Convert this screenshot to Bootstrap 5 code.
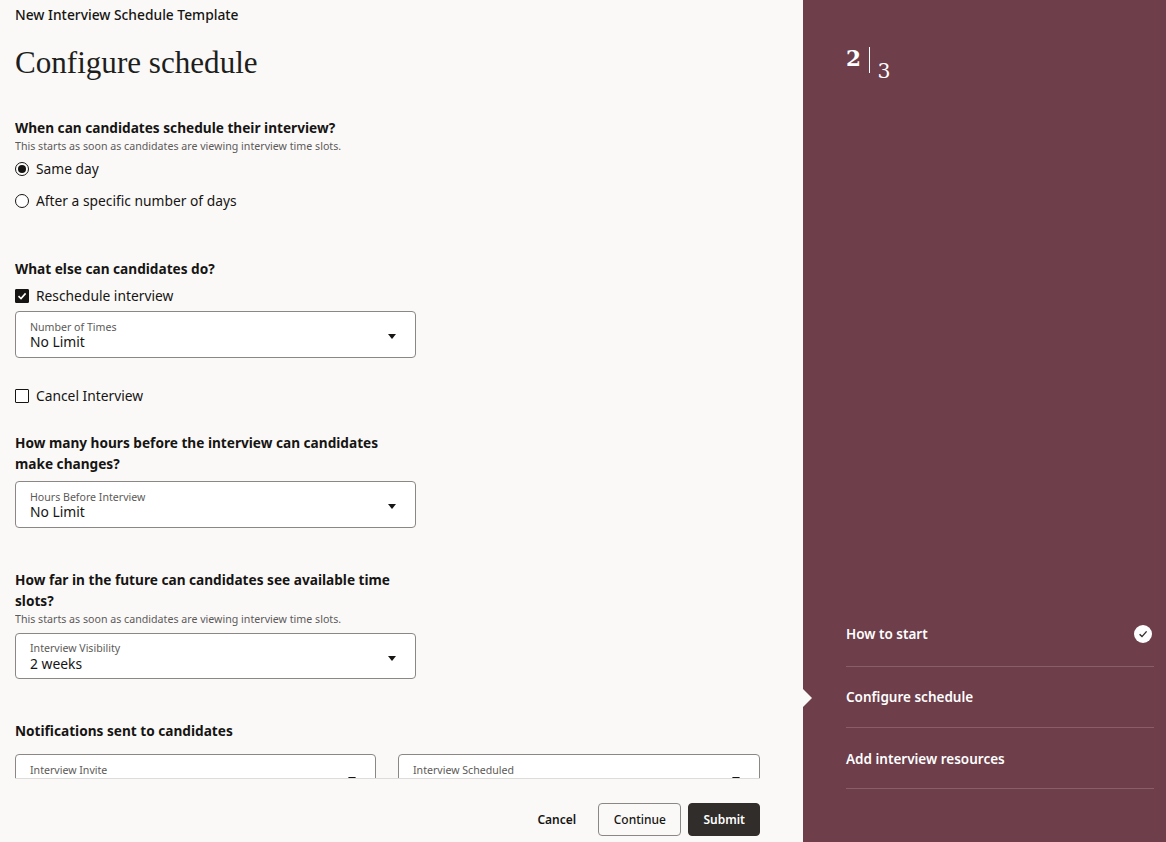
<!DOCTYPE html>
<html lang="en">
<head>
<meta charset="utf-8">
<title>Configure schedule</title>
<link href="https://cdn.jsdelivr.net/npm/bootstrap@5.3.0/dist/css/bootstrap.min.css" rel="stylesheet">
<style>
html, body { height: 842px; overflow: hidden; }
body { background: #fbf9f8; font-family: "Noto Sans", "Open Sans", sans-serif; color: #161513; font-size: 14px; }
.shell { height: 842px; }
.main-pane { width: 803px; }
.side-pane { width: 363px; background: #6e3e4a; color: #fff; padding: 0 12px 53px 43px; position: relative; }
.scroll-pane { height: 779px; overflow: hidden; padding: 6px 0 0 0; margin: 0 43px 0 15px; border-bottom: 1px solid #dedcda; }
.kicker { font-size: 13.8px; font-weight: 500; line-height: 18px; }
.page-title { font-family: "Liberation Serif", serif; font-size: 31.1px; font-weight: 400; line-height: 40px; margin: 19px 0 34px; color: #201e1c; }
.q-title { font-size: 13.65px; font-weight: 700; line-height: 21px; margin: 0; }
.hint { font-size: 10.65px; line-height: 14px; color: #5c5a58; margin-top: 1px; }
.opt { display: flex; align-items: center; gap: 7px; height: 32px; font-size: 13.8px; line-height: 20px; }
.opt-box { flex: 0 0 14px; width: 14px; height: 14px; border: 1.4px solid #161513; background: #fff; display: flex; align-items: center; justify-content: center; }
.opt-box.is-round { border-radius: 50%; }
.opt-box.is-square { border-radius: 1px; }
.opt-box.is-on { background: #161513; }
.dot { width: 8px; height: 8px; border-radius: 50%; background: #161513; }
.pick { width: 401px; height: 47px; background: #fff; border: 1px solid #8a8785; border-radius: 4px; padding: 8px 14px 0; position: relative; flex: none; }
.pick-short { height: 46px; padding-top: 7px; }
.pick-short .pick-value { line-height: 17px; }
.pick-wide { width: 361px; }
.pick-wider { width: 362px; }
.pick-label { font-size: 10.6px; line-height: 14px; color: #5c5a58; }
.pick-value { font-size: 13.85px; line-height: 16px; }
.caret { position: absolute; right: 19px; top: 22px; width: 0; height: 0; border-left: 4.5px solid transparent; border-right: 4.5px solid transparent; border-top: 5px solid #161513; }
.footer-bar { height: 63px; padding: 24px 43px 0 0; gap: 7px; }
.act { height: 33px; font-size: 12px; font-weight: 500; line-height: 1; border-radius: 4px; display: flex; align-items: center; padding: 1px 14.5px 0; }
.act-plain { color: #161513; background: transparent; border: 0; padding: 1px 15px 0; font-weight: 600; }
.act-line { color: #161513; background: transparent; border: 1px solid #8a8785; }
.act-solid { color: #fff; background: #312d2a; border: 1px solid #312d2a; font-weight: 600; padding: 1px 14px 0; }
.count { font-family: "DejaVu Serif", serif; padding-top: 47px; line-height: 1; }
.count-now { font-size: 21.5px; line-height: 24px; font-weight: 700; }
.count-bar { width: 1.5px; height: 26px; background: #fff; margin: 0 7px 0 8px; }
.count-all { font-size: 20.5px; line-height: 22px; padding-top: 13px; }
.step { height: 61px; border-bottom: 1px solid #8a5e69; font-size: 13.5px; font-weight: 600; }
.step-first { padding-bottom: 4px; }
.step-last { padding-top: 2px; }
.step-mark { position: absolute; left: 0; top: 689px; width: 0; height: 0; border-top: 9px solid transparent; border-bottom: 9px solid transparent; border-left: 9px solid #fbf9f8; }
.done { width: 18px; height: 18px; border-radius: 50%; background: #fff; margin-right: 2px; }
.what-else { margin-top: 41px; margin-bottom: 2px; }
.tight-opt { height: 30px; }
.cancel-opt { margin-top: 22px; }
.hours-q { margin-top: 20px; }
.pick-gap { margin-top: 7px; }
.far-q { margin-top: 41px; }
.hint-gap { margin-top: 7px; }
.notes-q { margin-top: 41px; }
.notes-row { margin-top: 13px; gap: 22px; }
</style>
</head>
<body>
<div class="shell d-flex">
  <main class="main-pane d-flex flex-column">
    <div class="scroll-pane">
      <div class="kicker">New Interview Schedule Template</div>
      <h1 class="page-title">Configure schedule</h1>

      <h2 class="q-title">When can candidates schedule their interview?</h2>
      <div class="hint">This starts as soon as candidates are viewing interview time slots.</div>
      <div class="opt"><span class="opt-box is-round"><span class="dot"></span></span><span>Same day</span></div>
      <div class="opt"><span class="opt-box is-round"></span><span>After a specific number of days</span></div>

      <h2 class="q-title what-else">What else can candidates do?</h2>
      <div class="opt tight-opt"><span class="opt-box is-square is-on"><svg width="10" height="10" viewBox="0 0 10 10"><path d="M1.5 5.2 4 7.6 8.6 2.4" fill="none" stroke="#fff" stroke-width="1.6"/></svg></span><span>Reschedule interview</span></div>
      <div class="pick">
        <div class="pick-label">Number of Times</div>
        <div class="pick-value">No Limit</div>
        <span class="caret"></span>
      </div>
      <div class="opt cancel-opt"><span class="opt-box is-square"></span><span>Cancel Interview</span></div>

      <h2 class="q-title hours-q">How many hours before the interview can candidates<br>make changes?</h2>
      <div class="pick pick-gap">
        <div class="pick-label">Hours Before Interview</div>
        <div class="pick-value">No Limit</div>
        <span class="caret"></span>
      </div>

      <h2 class="q-title far-q">How far in the future can candidates see available time<br>slots?</h2>
      <div class="hint">This starts as soon as candidates are viewing interview time slots.</div>
      <div class="pick pick-short hint-gap">
        <div class="pick-label">Interview Visibility</div>
        <div class="pick-value">2 weeks</div>
        <span class="caret"></span>
      </div>

      <h2 class="q-title notes-q">Notifications sent to candidates</h2>
      <div class="d-flex notes-row">
        <div class="pick pick-wide">
          <div class="pick-label">Interview Invite</div>
          <span class="caret"></span>
        </div>
        <div class="pick pick-wider">
          <div class="pick-label">Interview Scheduled</div>
          <span class="caret"></span>
        </div>
      </div>
    </div>
    <div class="footer-bar d-flex justify-content-end align-items-start">
      <button type="button" class="btn act act-plain">Cancel</button>
      <button type="button" class="btn act act-line">Continue</button>
      <button type="button" class="btn act act-solid">Submit</button>
    </div>
  </main>
  <aside class="side-pane d-flex flex-column">
    <div class="count d-flex align-items-start">
      <span class="count-now">2</span><span class="count-bar"></span><span class="count-all">3</span>
    </div>
    <div class="mt-auto">
      <div class="step step-first d-flex justify-content-between align-items-center"><span>How to start</span><span class="done d-flex align-items-center justify-content-center"><svg width="12" height="12" viewBox="0 0 12 12"><path d="M2.6 6.2 5 8.6 9.6 3.4" fill="none" stroke="#312d2a" stroke-width="1.4"/></svg></span></div>
      <div class="step d-flex align-items-center"><span>Configure schedule</span></div>
      <div class="step step-last d-flex align-items-center"><span>Add interview resources</span></div>
    </div>
    <span class="step-mark"></span>
  </aside>
</div>
</body>
</html>
